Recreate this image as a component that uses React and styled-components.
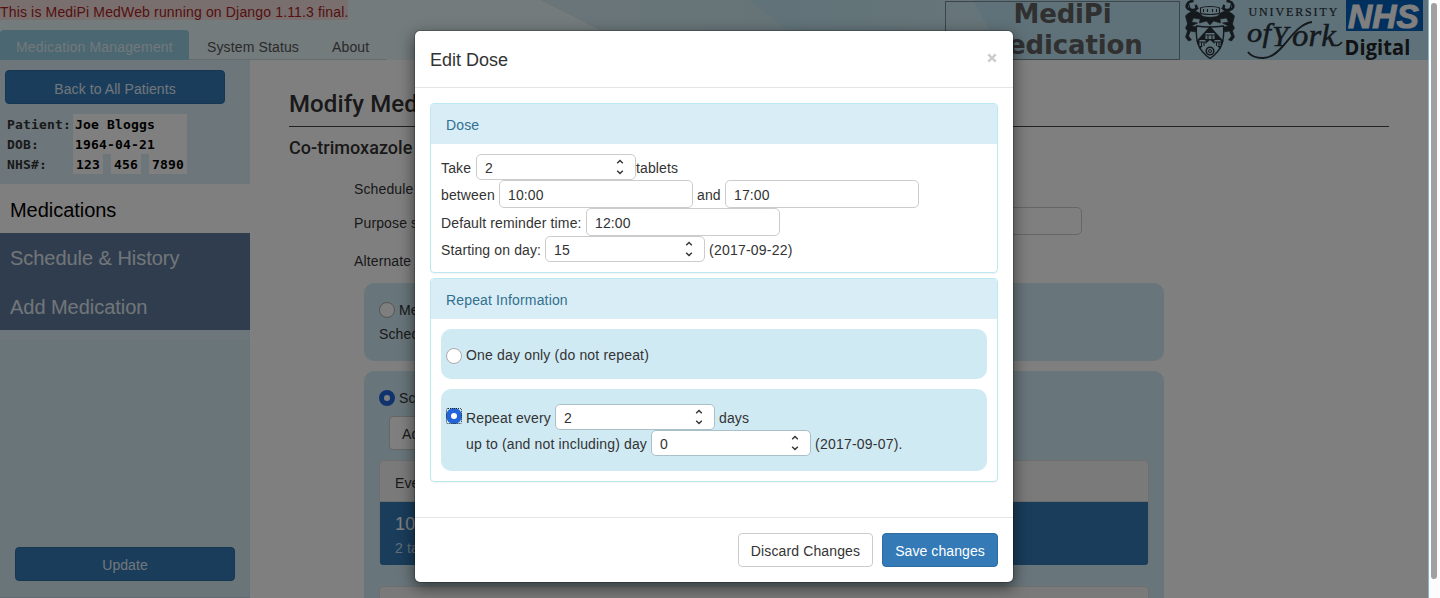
import React from 'react';
import styled, { createGlobalStyle, css } from 'styled-components';

const GlobalStyle = createGlobalStyle`
  * { box-sizing: border-box; }
  body {
    margin: 0;
    overflow: hidden;
    background: #fff;
    color: #333;
    font: 14px/20px "Liberation Sans", Arial, sans-serif;
    letter-spacing: 0.13px;
  }
  input, button { font: inherit; letter-spacing: inherit; color: inherit; }
`;

const Window = styled.div`
  display: flex;
  width: 1440px;
  height: 598px;
  overflow: hidden;
`;

const Site = styled.div`
  position: relative;
  display: flex;
  flex-direction: column;
  width: 1429px;
  height: 598px;
  overflow: hidden;
  border-right: 1px solid #84b6ca;
  white-space: nowrap;
`;

const ScrollTrack = styled.div`
  width: 11px;
  padding: 3px 3px 0 2px;
  background: #fcfcfc;
`;

const ScrollThumb = styled.div`
  height: 576px;
  border-radius: 3px;
  background: #a0a0a0;
`;

/* Header */
const Header = styled.header`
  position: relative;
  display: flex;
  justify-content: space-between;
  height: 60px;
  flex: none;
  background: #c0e5f2;
`;

const HeaderArt = styled.svg`
  position: absolute;
  inset: 0;
`;

const HeaderLeft = styled.div`
  position: relative;
  display: flex;
  flex-direction: column;
  align-items: flex-start;
  justify-content: space-between;
`;

const VersionNotice = styled.div`
  width: 348px;
  height: 20px;
  padding-top: 2px;
  background: #f2dede;
  color: #a81e22;
  letter-spacing: 0.155px;
`;

const Tabs = styled.nav`
  display: flex;
  height: 30px;
  width: 387px;
`;

const Tab = styled.a`
  height: 30px;
  padding: 7px 0 0 18px;
  width: ${p => p.$width}px;
  color: #555;
  border-bottom: 1px solid #cfd8da;
  ${p => p.$active && css`
    padding-left: 16px;
    color: #e4f0f4;
    background: #94cee4;
    border-bottom: 0;
    border-radius: 4px 4px 0 0;
    letter-spacing: 0.17px;
  `}
`;

const HeaderRight = styled.div`
  position: relative;
  display: flex;
`;

const Brand = styled.div`
  width: 235px;
  height: 59px;
  margin-top: 1px;
  border: 1px solid #7b8a90;
  display: flex;
  flex-direction: column;
  align-items: center;
  font: bold 26px/31px "DejaVu Sans", sans-serif;
  letter-spacing: -0.15px;
  color: #606060;
`;

const BrandLine = styled.span`
  height: 31px;
  margin-top: ${p => (p.$first ? -3 : 0)}px;
`;

const Logos = styled.svg`
  display: block;
`;

/* Columns */
const Columns = styled.div`
  display: flex;
  flex: 1;
  min-height: 0;
`;

const Sidebar = styled.aside`
  display: flex;
  flex-direction: column;
  width: 250px;
  background: #d2eaf3;
`;

const PatientBox = styled.section`
  height: 124px;
  padding: 10px 5px 0;
  background: #daedf7;
`;

const PrimaryButton = styled.button`
  display: block;
  width: ${p => p.$width}px;
  height: 34px;
  padding: ${p => p.$drop || 1}px 0 0;
  border: 1px solid #2e6da4;
  border-radius: 4px;
  background: #337ab7;
  color: ${p => (p.$soft ? '#e2edf6' : '#fff')};
  text-align: center;
  letter-spacing: 0.08px;
`;

const PatientGrid = styled.dl`
  display: grid;
  grid-template-columns: 66px 114px;
  grid-auto-rows: 20px;
  margin: 10px 0 0 2px;
  font: bold 13px/22px "DejaVu Sans Mono", monospace;
  letter-spacing: 0.17px;
`;

const Term = styled.dt`
  margin: 0;
`;

const Detail = styled.dd`
  margin: 0;
  padding-left: 2px;
  background: #fff;
  color: #000;
`;

const NumberGroups = styled.dd`
  display: flex;
  gap: 8px;
  margin: 0;
`;

const NumberGroup = styled.span`
  padding-left: 3px;
  width: ${p => p.$width}px;
  background: #fff;
  color: #000;
`;

const SideNav = styled.nav`
  display: flex;
  flex-direction: column;
  background: #5e7b9d;
  font-size: 20px;
  line-height: 26px;
  letter-spacing: -0.04px;
`;

const SideLink = styled.a`
  height: ${p => (p.$active ? 49 : 48.5)}px;
  padding: ${p => (p.$active ? 13 : 12)}px 10px 0;
  color: ${p => (p.$active ? '#000' : '#e4ebf2')};
  background: ${p => (p.$active ? '#fff' : 'transparent')};
`;

const NavFoot = styled.div`
  height: 10px;
  background: #daedf7;
`;

const SideFooter = styled.div`
  margin-top: auto;
  padding: 0 15px 16px;
  border-bottom: 1px solid #c0d8e2;
`;

const Main = styled.main`
  flex: 1;
  padding: 30px 39px 0;
  background: #fff;
  overflow: hidden;
`;

const Title = styled.h1`
  height: 37px;
  margin: 0;
  border-bottom: 1px solid #444;
  font: 500 24px/28px Roboto, sans-serif;
  letter-spacing: 0.1px;
`;

const Subtitle = styled.h2`
  margin: 10px 0 0;
  font: 500 18px/22px Roboto, sans-serif;
  letter-spacing: 0.04px;
`;

const FormRow = styled.div`
  display: flex;
  align-items: center;
  justify-content: space-between;
  height: ${p => p.$height}px;
  width: 728px;
  margin-left: 65px;
`;

const EmptyInput = styled.div`
  width: 500px;
  height: 28px;
  margin-bottom: 4px;
  border: 1px solid #ccc;
  border-radius: 5px;
`;

const ButtonRow = styled.div`
  padding: 6px 10px 10px;
`;

const Well = styled.section`
  width: ${p => p.$width || 546}px;
  height: ${p => p.$height}px;
  margin: ${p => p.$margin || '0'};
  padding: ${p => p.$padding};
  border-radius: 10px;
  background: #d0eaf4;
`;

const ChoiceRow = styled.label`
  display: flex;
  align-items: center;
  gap: 4px;
  height: ${p => p.$height}px;
`;

const RadioMark = styled.span`
  position: relative;
  flex: none;
  width: 16px;
  height: 16px;
  border-radius: 50%;
  margin-top: ${p => p.$drop || 0}px;
  border: ${p => (p.$checked ? '5px solid #2065da' : '1px solid #aaa')};
  background: #fff;
  ${p => p.$focus && css`
    &::after {
      content: '';
      position: absolute;
      inset: -5px;
      border: 1px dotted #222;
      border-radius: 2px;
    }
  `}
`;

const PlainButton = styled.button`
  display: block;
  width: ${p => p.$width}px;
  height: 34px;
  padding: ${p => (p.$left ? '1px 0 0 12px' : '1px 0 0')};
  text-align: ${p => (p.$left ? 'left' : 'center')};
  border: 1px solid #ccc;
  border-radius: 4px;
  background: #fff;
  color: #333;
`;

const EventCard = styled.div`
  width: 770px;
  height: 105px;
  margin-bottom: 21px;
  border: 1px solid #ddd;
  border-radius: 4px;
  background: #f5f5f5;
`;

const EventHead = styled.div`
  height: 41px;
  padding: 12px 15px 0;
  border-bottom: 1px solid #ddd;
`;

const EventItem = styled.div`
  height: 63px;
  padding: 9px 15px 0;
  border-radius: 0 0 3px 3px;
  background: #337ab7;
  color: #fff;
`;

const EventTime = styled.div`
  font-size: 18px;
  line-height: 26px;
`;

const EventDose = styled.div`
  color: #c7ddef;
  line-height: 22px;
`;

/* Modal */
const Backdrop = styled.div`
  position: absolute;
  inset: 0 -1px 0 0;
  background: rgba(0, 0, 0, 0.5);
`;

const Dialog = styled.section`
  position: absolute;
  top: 30px;
  left: 414px;
  width: 600px;
  height: 553px;
  display: flex;
  flex-direction: column;
  border: 1px solid rgba(0, 0, 0, 0.2);
  border-radius: 6px;
  background: #fff;
  background-clip: padding-box;
  box-shadow: 0 5px 15px rgba(0, 0, 0, 0.5);
`;

const DialogHeader = styled.header`
  display: flex;
  justify-content: space-between;
  height: 57px;
  padding: 16px 15px 0;
  border-bottom: 1px solid #e5e5e5;
`;

const DialogTitle = styled.h4`
  margin: 0;
  font-size: 18px;
  font-weight: 400;
  line-height: 26px;
  letter-spacing: 0;
`;

const Close = styled.svg`
  margin: 6px 1px 0 0;
`;

const DialogBody = styled.div`
  flex: 1;
  padding: 15px;
`;

const Panel = styled.section`
  height: ${p => p.$height}px;
  margin-bottom: 5px;
  border: 1px solid #bce8f1;
  border-radius: 4px;
  box-shadow: 0 1px 1px rgba(0, 0, 0, 0.05);
`;

const PanelHead = styled.h5`
  height: 40px;
  margin: 0;
  padding: 11px 15px 0;
  background: #d9edf7;
  color: #31708f;
  border-radius: 3px 3px 0 0;
  font-size: 14px;
  font-weight: 400;
  line-height: 20px;
  letter-spacing: 0.15px;
`;

const PanelBody = styled.div`
  padding: 10px;
`;

const FieldRow = styled.div`
  display: flex;
  align-items: center;
  height: ${p => p.$height}px;
  padding-left: ${p => p.$indent || 0}px;
`;

const Label = styled.span`
  width: ${p => (p.$width ? `${p.$width}px` : 'auto')};
  padding-top: ${p => (p.$flush ? 0 : 1)}px;
  margin-left: ${p => p.$gap || 0}px;
  letter-spacing: ${p => p.$track || 0.13}px;
`;

const TextInput = styled.input`
  width: 194px;
  height: 28px;
  padding: 2px 8px 0;
  border: 1px solid #ccc;
  border-radius: 5px;
  background: #fff;
  outline: 0;
`;

const NumberBox = styled.span`
  display: flex;
  align-items: center;
  justify-content: space-between;
  width: 160px;
  height: 26px;
  padding: 0 11px 0 8px;
  border: 1px solid ${p => (p.$tinted ? '#aabfc8' : '#ccc')};
  border-radius: 5px;
  background: #fff;
`;

const NumberValue = styled.input`
  width: 100px;
  height: 24px;
  padding: 2px 0 0;
  border: 0;
  outline: 0;
  background: transparent;
`;

const DialogFooter = styled.footer`
  display: flex;
  justify-content: flex-end;
  gap: 9px;
  height: 65px;
  padding: 15px;
  border-top: 1px solid #e5e5e5;
`;

function NumberField({ value, tinted }) {
  return (
    <NumberBox $tinted={tinted}>
      <NumberValue defaultValue={value} />
      <svg width="8" height="16" viewBox="0 0 8 16" fill="none" stroke="#333" strokeWidth="1.4">
        <path d="M1.200 4.200 4 1.400 6.800 4.200M1.200 11.800 4 14.600 6.800 11.800" />
      </svg>
    </NumberBox>
  );
}

function Crest() {
  return (
    <g fill="#27323a" stroke="#27323a">
      <path fill="none" strokeWidth="2.600" d="M11 1C4 1 2 8 7 9.500s9-.5 6-4.500M44 1c7 0 9 7 4 8.500s-9-.5-6-4.500" />
      <path fill="none" strokeWidth="1.300" d="M6 4 9 13l7-5M49 4l-3 9-7-5" />
      <path strokeWidth=".6" d="M3 16c5-6 12-6 16-1l-2 4-6-1-2 4 6 1-6 3 5 1-1 5-5-1-2 5 3 4-3 1-3-4 2-6-2-3 2-4-1-4zM52 16c-5-6-12-6-16-1l2 4 6-1 2 4-6 1 6 3-5 1 1 5 5-1 2 5-3 4 3 1 3-4-2-6 2-3-2-4 1-4z" />
      <path fill="none" strokeWidth="1.100" d="M18 8c4-2 15-2 19 0v5c-4 2-15 2-19 0zM21 9v3M25 9v3M30 9v3M34 9v3" />
      <path strokeWidth=".6" d="M18 15c4 3 15 3 19 0l1 8-7-2-3.500 4-3.500-4-7 2z" />
      <path fill="#c0e5f2" strokeWidth="1.400" d="M14 26q13 2 27 0c1 14-1 24-13.500 32.500C15 50 13 40 14 26z" />
      <path stroke="none" d="M14 41 27.500 26 41 41l-3 8-10.500-9L17 49z" />
      <path fill="#c0e5f2" stroke="none" d="M23 33h9v6h-9zM17 40h6v6h-6zM32 40h6v6h-6z" />
      <path fill="none" strokeWidth="1.100" d="M23 35h9M25.500 35v4M29.500 35v4M17 42h6M19 42v4M21.500 42v4M32 42h6M34 42v4M36.500 42v4" />
      <circle cx="27.500" cy="51" r="3.800" fill="#c0e5f2" strokeWidth="1.600" />
      <circle cx="27.500" cy="51" r="1.500" fill="none" strokeWidth="1" />
    </g>
  );
}

function HeaderLogos() {
  return (
    <Logos width="248" height="60" viewBox="0 0 248 60">
      <g transform="translate(2.500 0)"><Crest /></g>
      <text x="68.500" y="16" fill="#27323a" stroke="#27323a" strokeWidth=".2" fontFamily="Liberation Serif, serif" fontSize="12" textLength="89">UNIVERSITY</text>
      <g fill="#27323a" stroke="#27323a" strokeWidth=".5" fontFamily="Liberation Serif, serif" fontStyle="italic">
        <text x="67" y="42" fontSize="27" textLength="24" lengthAdjust="spacingAndGlyphs">of</text>
        <text x="92" y="46" fontSize="29">Y</text>
        <text x="112" y="46" fontSize="32" textLength="44" lengthAdjust="spacingAndGlyphs">ork</text>
      </g>
      <path d="M132 22c-13 2-21 15-29 24-6 7-12 12-20 12-8 0-13-3-15-6" fill="none" stroke="#27323a" strokeWidth="1.900" />
      <path d="M154 45q4 2 8-3" fill="none" stroke="#27323a" strokeWidth="1.500" />
      <rect x="166" y="0" width="77" height="31" fill="#0060bd" />
      <text x="168" y="28" fill="#fff" fontFamily="Liberation Sans, sans-serif" fontStyle="italic" fontWeight="700" fontSize="34" textLength="71" lengthAdjust="spacingAndGlyphs" stroke="#fff" strokeWidth="1">NHS</text>
      <text x="164.500" y="54.500" fill="#202428" fontFamily="Open Sans, sans-serif" fontWeight="700" fontSize="21" textLength="66" lengthAdjust="spacingAndGlyphs">Digital</text>
    </Logos>
  );
}

function SiteHeader() {
  return (
    <Header>
      <HeaderArt width="1428" height="60" viewBox="0 0 1428 60">
        <defs>
          <linearGradient id="mid"><stop offset="0" stopColor="#d5ebf2" /><stop offset="1" stopColor="#cbe8f0" /></linearGradient>
          <linearGradient id="far"><stop offset="0" stopColor="#c1e6f3" /><stop offset="1" stopColor="#ceebf2" /></linearGradient>
        </defs>
        <path fill="#e6f6f8" d="M0 0h541l118 60H0z" />
        <path fill="url(#mid)" d="M541 0h209l72 60H659z" />
        <path fill="url(#far)" d="M750 0h223l33 60H822z" />
      </HeaderArt>
      <HeaderLeft>
        <VersionNotice>This is MediPi MedWeb running on Django 1.11.3 final.</VersionNotice>
        <Tabs>
          <Tab $active $width={189}>Medication Management</Tab>
          <Tab $width={125}>System Status</Tab>
          <Tab $width={73}>About</Tab>
        </Tabs>
      </HeaderLeft>
      <HeaderRight>
        <Brand>
          <BrandLine $first>MediPi</BrandLine>
          <BrandLine>Medication</BrandLine>
        </Brand>
        <HeaderLogos />
      </HeaderRight>
    </Header>
  );
}

function PatientSidebar() {
  return (
    <Sidebar>
      <PatientBox>
        <PrimaryButton $width={220} $soft $drop={3}>Back to All Patients</PrimaryButton>
        <PatientGrid>
          <Term>Patient:</Term><Detail>Joe Bloggs</Detail>
          <Term>DOB:</Term><Detail>1964-04-21</Detail>
          <Term>NHS#:</Term>
          <NumberGroups>
            <NumberGroup $width={30}>123</NumberGroup>
            <NumberGroup $width={30}>456</NumberGroup>
            <NumberGroup $width={38}>7890</NumberGroup>
          </NumberGroups>
        </PatientGrid>
      </PatientBox>
      <SideNav>
        <SideLink $active>Medications</SideLink>
        <SideLink>Schedule &amp; History</SideLink>
        <SideLink>Add Medication</SideLink>
      </SideNav>
      <NavFoot />
      <SideFooter>
        <PrimaryButton $width={220} $soft>Update</PrimaryButton>
      </SideFooter>
    </Sidebar>
  );
}

function MedicationForm() {
  return (
    <Main>
      <Title>Modify Medication</Title>
      <Subtitle>Co-trimoxazole</Subtitle>
      <FormRow $height={60}>Schedule</FormRow>
      <FormRow $height={8}>Purpose set<EmptyInput /></FormRow>
      <FormRow $height={68}>Alternate</FormRow>
      <Well $width={800} $height={78} $margin="-12px 0 0 75px" $padding="15px">
        <ChoiceRow $height={24}><RadioMark />Med</ChoiceRow>
        <ChoiceRow $height={24}>Schedule</ChoiceRow>
      </Well>
      <Well $width={800} $height={300} $margin="10px 0 0 75px" $padding="15px">
        <ChoiceRow $height={24}><RadioMark $checked />Schedule</ChoiceRow>
        <ButtonRow><PlainButton $width={92} $left>Add</PlainButton></ButtonRow>
        <EventCard>
          <EventHead>Event</EventHead>
          <EventItem>
            <EventTime>10:00</EventTime>
            <EventDose>2 tablets</EventDose>
          </EventItem>
        </EventCard>
        <EventCard />
      </Well>
    </Main>
  );
}

function DoseDialog() {
  return (
    <Dialog>
      <DialogHeader>
        <DialogTitle>Edit Dose</DialogTitle>
        <Close width="10" height="10" viewBox="0 0 10 10" stroke="#ccc" strokeWidth="2.400">
          <path d="M1.300 1.300 8.700 8.700M8.700 1.300 1.300 8.700" />
        </Close>
      </DialogHeader>
      <DialogBody>
        <Panel $height={170}>
          <PanelHead>Dose</PanelHead>
          <PanelBody>
            <FieldRow $height={26}>
              <Label $width={35}>Take</Label>
              <NumberField value="2" />
              <Label>tablets</Label>
            </FieldRow>
            <FieldRow $height={28}>
              <Label $width={58}>between</Label>
              <TextInput defaultValue="10:00" />
              <Label $gap={4} $width={28}>and</Label>
              <TextInput defaultValue="17:00" />
            </FieldRow>
            <FieldRow $height={28}>
              <Label $width={145}>Default reminder time:</Label>
              <TextInput defaultValue="12:00" />
            </FieldRow>
            <FieldRow $height={26}>
              <Label $width={104}>Starting on day:</Label>
              <NumberField value="15" />
              <Label $gap={4} $track={0.22}>(2017-09-22)</Label>
            </FieldRow>
          </PanelBody>
        </Panel>
        <Panel $height={204}>
          <PanelHead>Repeat Information</PanelHead>
          <PanelBody>
            <Well $height={50} $padding="15px 5px">
              <ChoiceRow $height={22}><RadioMark $drop={2} /><Label $flush $track={0.17}>One day only (do not repeat)</Label></ChoiceRow>
            </Well>
            <Well $height={82} $margin="10px 0 0" $padding="15px 5px">
              <FieldRow $height={26}>
                <RadioMark $checked $focus $drop={-2} />
                <Label $gap={4} $width={89}>Repeat every</Label>
                <NumberField value="2" tinted />
                <Label $gap={4}>days</Label>
              </FieldRow>
              <FieldRow $height={26} $indent={20}>
                <Label $width={185} $track={0.15}>up to (and not including) day</Label>
                <NumberField value="0" tinted />
                <Label $gap={4} $track={0.22}>(2017-09-07).</Label>
              </FieldRow>
            </Well>
          </PanelBody>
        </Panel>
      </DialogBody>
      <DialogFooter>
        <PlainButton $width={135}>Discard Changes</PlainButton>
        <PrimaryButton $width={116}>Save changes</PrimaryButton>
      </DialogFooter>
    </Dialog>
  );
}

export default function App() {
  return (
    <>
      <GlobalStyle />
      <Window>
        <Site>
          <SiteHeader />
          <Columns>
            <PatientSidebar />
            <MedicationForm />
          </Columns>
          <Backdrop />
          <DoseDialog />
        </Site>
        <ScrollTrack><ScrollThumb /></ScrollTrack>
      </Window>
    </>
  );
}
